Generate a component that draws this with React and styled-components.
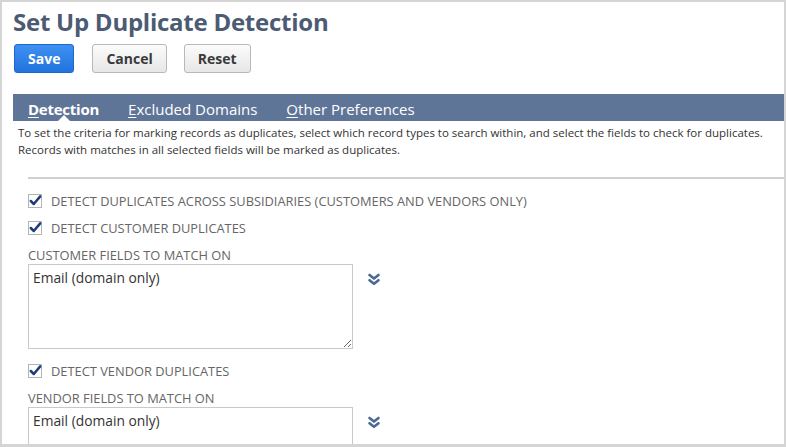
import React from 'react';
import styled, { createGlobalStyle } from 'styled-components';

const GlobalStyle = createGlobalStyle`
  body {
    margin: 0;
    background: #ffffff;
    font-family: 'Open Sans', 'Liberation Sans', sans-serif;
  }
`;

const tabs = [
  { key: 'D', rest: 'etection', active: true },
  { key: 'E', rest: 'xcluded Domains' },
  { key: 'O', rest: 'ther Preferences' },
];

const fieldText = 'Email (domain only)';

function CheckMark() {
  return (
    <svg width='13' height='13' viewBox='0 0 13 13'>
      <path
        d='M1.8 7 L4.8 10 L11.2 2.4'
        fill='none'
        stroke='#1d3d7a'
        strokeWidth='2.5'
        strokeLinecap='round'
        strokeLinejoin='round'
      />
    </svg>
  );
}

function DoubleChevron() {
  return (
    <svg width='14' height='13' viewBox='0 0 14 13'>
      <g
        fill='none'
        stroke='#4a6a93'
        strokeWidth='2.6'
        strokeLinecap='round'
        strokeLinejoin='round'
      >
        <polyline points='2.5,2 7,5.6 11.5,2' />
        <polyline points='2.5,7.2 7,10.8 11.5,7.2' />
      </g>
    </svg>
  );
}

function CheckRow({ label }) {
  return (
    <StCheckRow>
      <StBox>
        <CheckMark />
      </StBox>
      <StCheckLabel>{label}</StCheckLabel>
    </StCheckRow>
  );
}

function MatchField({ label }) {
  return (
    <>
      <StFieldLabel>{label}</StFieldLabel>
      <StFieldRow>
        <StTextArea readOnly value={fieldText} />
        <StIcon>
          <DoubleChevron />
        </StIcon>
      </StFieldRow>
    </>
  );
}

function App() {
  return (
    <>
      <GlobalStyle />
      <StFrame>
        <StTitle>Set Up Duplicate Detection</StTitle>
        <StButtons>
          <StButton primary>Save</StButton>
          <StButton>Cancel</StButton>
          <StButton>Reset</StButton>
        </StButtons>
        <StTabBar>
          {tabs.map((t) => (
            <StTab key={t.key} active={t.active}>
              <u>{t.key}</u>
              {t.rest}
            </StTab>
          ))}
        </StTabBar>
        <StDesc>
          To set the criteria for marking records as duplicates, select which
          record types to search within, and select the fields to check for
          duplicates.
          <br />
          Records with matches in all selected fields will be marked as
          duplicates.
        </StDesc>
        <StRule />
        <StForm>
          <CheckRow label='DETECT DUPLICATES ACROSS SUBSIDIARIES (CUSTOMERS AND VENDORS ONLY)' />
          <CheckRow label='DETECT CUSTOMER DUPLICATES' />
          <MatchField label='CUSTOMER FIELDS TO MATCH ON' />
          <CheckRow label='DETECT VENDOR DUPLICATES' />
          <MatchField label='VENDOR FIELDS TO MATCH ON' />
        </StForm>
      </StFrame>
    </>
  );
}

export default App;

const StFrame = styled.div`
  width: 786px;
  height: 447px;
  box-sizing: border-box;
  border: 2px solid #d5d5d5;
  border-bottom-width: 3px;
  padding: 4px 0 0 11px;
  overflow: hidden;
  background: #ffffff;
`;

const StTitle = styled.h1`
  margin: 0;
  font-size: 24px;
  line-height: 32px;
  font-weight: 700;
  color: #4c5b73;
  letter-spacing: -0.25px;
`;

const StButtons = styled.div`
  display: flex;
  gap: 17px;
  margin: 6px 0 0 1px;
  & > :first-child {
    margin-right: 1px;
  }
`;

const StButton = styled.button`
  height: 29px;
  padding: 0 13px;
  box-sizing: border-box;
  border-radius: 3px;
  font-family: 'Open Sans', 'Liberation Sans', sans-serif;
  font-size: 14px;
  font-weight: 700;
  cursor: pointer;
  color: ${(p) => (p.primary ? '#ffffff' : '#3a3a3a')};
  border: 1px solid ${(p) => (p.primary ? '#1e66cc' : '#b8b8b8')};
  background: ${(p) =>
    p.primary
      ? 'linear-gradient(#3e90f1, #2274de)'
      : 'linear-gradient(#fbfbfb, #e7e7e7)'};
  min-width: ${(p) => (p.primary ? '60px' : '0')};
`;

const StTabBar = styled.div`
  display: flex;
  gap: 29px;
  height: 27px;
  margin-top: 21px;
  padding-left: 15px;
  background: #5f7597;
`;

const StTab = styled.div`
  position: relative;
  padding-top: 3px;
  line-height: 24px;
  font-size: 15px;
  color: #ffffff;
  font-weight: ${(p) => (p.active ? 700 : 400)};
  letter-spacing: ${(p) => (p.active ? '-0.25px' : '0')};
  u {
    text-underline-offset: 2px;
  }
  &::after {
    content: '';
    display: ${(p) => (p.active ? 'block' : 'none')};
    position: absolute;
    bottom: 0;
    left: 50%;
    margin-left: -6px;
    border-left: 6px solid transparent;
    border-right: 6px solid transparent;
    border-bottom: 6px solid #ffffff;
  }
`;

const StDesc = styled.p`
  margin: 0;
  padding: 3px 0 0 5px;
  font-size: 11.5px;
  line-height: 17px;
  color: #333333;
`;

const StRule = styled.div`
  height: 2px;
  margin: 19px 0 0 15px;
  background: #d0d0d0;
`;

const StForm = styled.div`
  display: flex;
  flex-direction: column;
  padding: 11px 0 0 15px;
`;

const StCheckRow = styled.div`
  display: flex;
  align-items: center;
  height: 22px;
  & + & {
    margin-top: 5px;
  }
`;

const StBox = styled.span`
  position: relative;
  width: 14px;
  height: 14px;
  box-sizing: border-box;
  border: 1px solid #b4b4b4;
  background: #ffffff;
  margin-right: 9px;
  svg {
    position: absolute;
    left: 0;
    top: -1px;
  }
`;

const StCheckLabel = styled.span`
  font-size: 12.85px;
  color: #666666;
`;

const StFieldLabel = styled.div`
  margin-top: 8px;
  margin-bottom: 1px;
  font-size: 12.85px;
  line-height: 16px;
  color: #666666;
`;

const StFieldRow = styled.div`
  display: flex;
  align-items: flex-start;
  gap: 14px;
  margin-bottom: 11px;
`;

const StTextArea = styled.textarea`
  width: 325px;
  height: 85px;
  box-sizing: border-box;
  margin: 0;
  padding: 4px 4px;
  border: 1px solid #c9c9c9;
  border-radius: 0;
  font-family: 'Open Sans', 'Liberation Sans', sans-serif;
  font-size: 13.8px;
  line-height: 18px;
  color: #333333;
  resize: both;
  outline: none;
`;

const StIcon = styled.div`
  display: flex;
  margin-top: 9px;
`;
